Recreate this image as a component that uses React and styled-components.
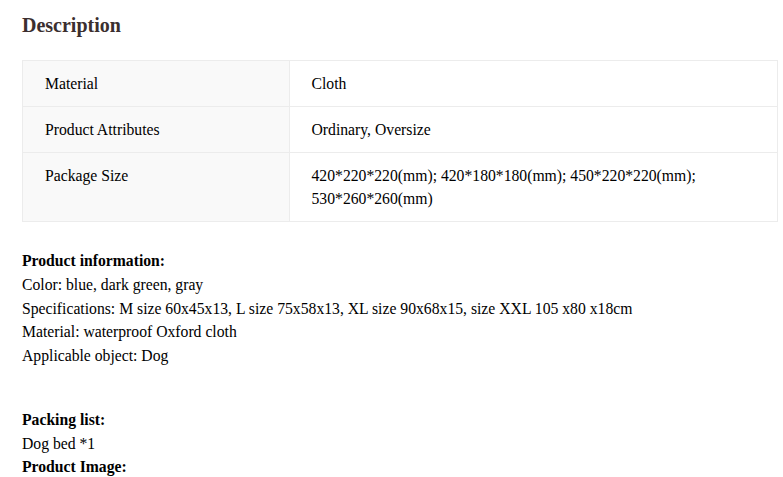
import styled, { createGlobalStyle } from "styled-components";

const GlobalStyle = createGlobalStyle`
  body {
    margin: 0;
    background: #fff;
    font-family: "Liberation Serif", "Times New Roman", serif;
    color: #000;
  }
`;

const Page = styled.div`
  padding: 12px 5px 0 22px;
`;

const Heading = styled.h2`
  margin: 0 0 22px;
  font-size: 20px;
  line-height: 26px;
  font-weight: bold;
  color: #3b2f2f;
`;

const Table = styled.table`
  width: 100%;
  border-collapse: collapse;
  font-size: 15.7px;
  line-height: 23px;
`;

const Cell = styled.td`
  border: 1px solid #ececec;
  padding: 11px 22px;
  vertical-align: top;
  background: ${(p) => (p.$label ? "#f9f9f9" : "#fff")};
  width: ${(p) => (p.$label ? "35.3%" : "auto")};
`;

const Info = styled.div`
  margin-top: 27px;
  font-size: 15.7px;
  line-height: 23.75px;
`;

const Line = styled.div`
  font-weight: ${(p) => (p.$bold ? "bold" : "normal")};
`;

const Spacer = styled.div`
  height: 40px;
`;

const rows = [
  ["Material", "Cloth"],
  ["Product Attributes", "Ordinary, Oversize"],
  [
    "Package Size",
    "420*220*220(mm); 420*180*180(mm); 450*220*220(mm); 530*260*260(mm)",
  ],
];

export default function App() {
  return (
    <>
      <GlobalStyle />
      <Page>
        <Heading>Description</Heading>
        <Table>
          <tbody>
            {rows.map(([k, v]) => (
              <tr key={k}>
                <Cell $label>{k}</Cell>
                <Cell>{v}</Cell>
              </tr>
            ))}
          </tbody>
        </Table>
        <Info>
          <Line $bold>Product information:</Line>
          <Line>Color: blue, dark green, gray</Line>
          <Line>
            Specifications: M size 60x45x13, L size 75x58x13, XL size 90x68x15, size XXL 105 x80 x18cm
          </Line>
          <Line>Material: waterproof Oxford cloth</Line>
          <Line>Applicable object: Dog</Line>
          <Spacer />
          <Line $bold>Packing list:</Line>
          <Line>Dog bed *1</Line>
          <Line $bold>Product Image:</Line>
        </Info>
      </Page>
    </>
  );
}
